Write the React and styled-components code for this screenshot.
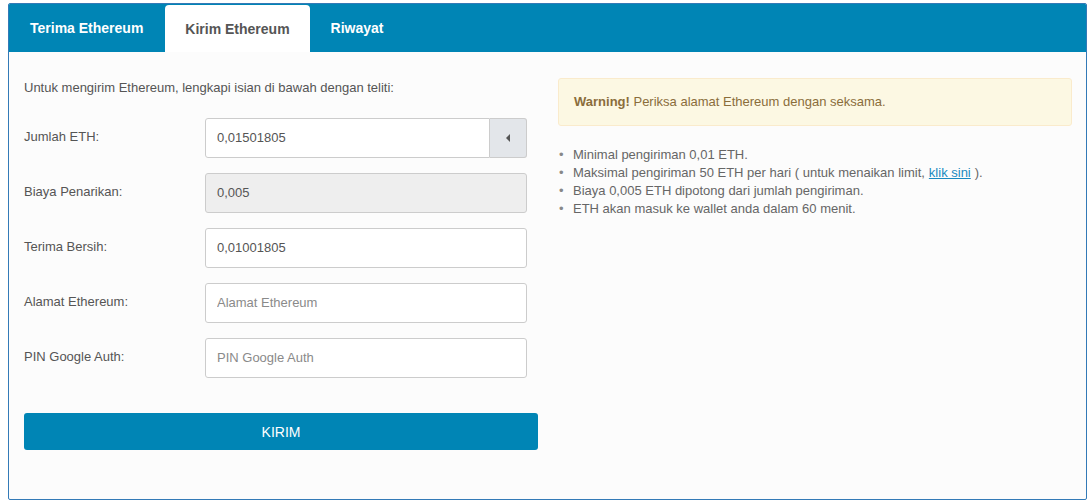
import React from "react";
import styled, { createGlobalStyle } from "styled-components";

const Global = createGlobalStyle`
  html, body { margin: 0; padding: 0; background: #ffffff; }
  body { font-family: "Liberation Sans", Arial, sans-serif; font-size: 13px; color: #555; }
  * { box-sizing: border-box; }
`;

const Page = styled.div`
  padding: 3px 5px 1px 8px;
`;

const Panel = styled.div`
  width: 1079px;
  border: 1px solid #337ab7;
  border-radius: 2px;
  background: #fcfcfc;
  overflow: hidden;
`;

const TabBar = styled.ul`
  display: flex;
  margin: 0;
  padding: 0;
  list-style: none;
  height: 48px;
  background: #0085b5;
`;

const Tab = styled.li`
  display: flex;
  align-items: center;
  margin-top: ${(p) => (p.$active ? "1px" : "0")};
  padding: 0 ${(p) => (p.$active ? "20px" : "21px")};
  margin-left: ${(p) => (p.$active ? "1px" : "0")};
  font-size: 14px;
  font-weight: bold;
  color: ${(p) => (p.$active ? "#555" : "#fff")};
  background: ${(p) => (p.$active ? "#fff" : "transparent")};
  border-radius: 4px 4px 0 0;
  cursor: pointer;
`;

const Body = styled.div`
  display: grid;
  grid-template-columns: 1fr 1fr;
  column-gap: 20px;
  padding: 26px 14px 49px 15px;
`;

const Column = styled.div`
  display: flex;
  flex-direction: column;
`;

const Intro = styled.p`
  margin: 0 0 20px;
  line-height: 20px;
  color: #555;
`;

const Rows = styled.div`
  display: flex;
  flex-direction: column;
  gap: 15px;
`;

const Row = styled.div`
  display: grid;
  grid-template-columns: 181px 322px;
  align-items: center;
`;

const Label = styled.label`
  color: #555;
  padding-bottom: 4px;
`;

const Input = styled.input`
  width: 100%;
  height: 40px;
  padding: 5px 11px 7px;
  font-family: "Liberation Sans", Arial, sans-serif;
  font-size: 13px;
  color: #555;
  background: ${(p) => (p.disabled ? "#eeeeee" : "#fff")};
  border: 1px solid #ccc;
  border-radius: ${(p) => (p.$grouped ? "3px 0 0 3px" : "3px")};
  outline: none;
  &::placeholder { color: #8a8a8a; }
  &:disabled { color: #555; -webkit-text-fill-color: #555; opacity: 1; }
`;

const Group = styled.div`
  display: flex;
`;

const Addon = styled.span`
  display: flex;
  align-items: center;
  justify-content: center;
  flex: 0 0 37px;
  height: 40px;
  background: #e3e6ea;
  border: 1px solid #ccc;
  border-left: none;
  border-radius: 0 3px 3px 0;
`;

const SubmitButton = styled.button`
  margin-top: 35px;
  height: 37px;
  width: 514px;
  border: none;
  border-radius: 3px;
  background: #0085b5;
  color: #fff;
  font-family: "Liberation Sans", Arial, sans-serif;
  font-size: 14px;
  cursor: pointer;
`;

const Warning = styled.div`
  padding: 14px 15px;
  line-height: 18px;
  background: #fcf8e3;
  border: 1px solid #faebcc;
  border-radius: 3px;
  color: #8a6d3b;
`;

const Notes = styled.ul`
  margin: 20px 0 0;
  padding: 0;
  list-style: none;
  line-height: 18px;
  color: #666;
`;

const Note = styled.li`
  display: flex;
  &::before {
    content: "•";
    flex: 0 0 14px;
    padding-left: 1px;
    color: #888;
  }
`;

const Link = styled.a`
  color: #1a8ac0;
  text-decoration: underline;
  margin: 0 4px;
`;

export default function App() {
  return (
    <>
      <Global />
      <Page>
        <Panel>
          <TabBar>
            <Tab>Terima Ethereum</Tab>
            <Tab $active>Kirim Ethereum</Tab>
            <Tab>Riwayat</Tab>
          </TabBar>
          <Body>
            <Column>
              <Intro>Untuk mengirim Ethereum, lengkapi isian di bawah dengan teliti:</Intro>
              <Rows>
                <Row>
                  <Label>Jumlah ETH:</Label>
                  <Group>
                    <Input $grouped defaultValue="0,01501805" />
                    <Addon>
                      <svg width="5" height="8" viewBox="0 0 5 8">
                        <path d="M4 0 L0 4 L4 8 Z" fill="#555" />
                      </svg>
                    </Addon>
                  </Group>
                </Row>
                <Row>
                  <Label>Biaya Penarikan:</Label>
                  <Input disabled defaultValue="0,005" />
                </Row>
                <Row>
                  <Label>Terima Bersih:</Label>
                  <Input defaultValue="0,01001805" />
                </Row>
                <Row>
                  <Label>Alamat Ethereum:</Label>
                  <Input placeholder="Alamat Ethereum" />
                </Row>
                <Row>
                  <Label>PIN Google Auth:</Label>
                  <Input placeholder="PIN Google Auth" />
                </Row>
              </Rows>
              <SubmitButton>KIRIM</SubmitButton>
            </Column>
            <Column>
              <Warning>
                <b>Warning!</b> Periksa alamat Ethereum dengan seksama.
              </Warning>
              <Notes>
                <Note>Minimal pengiriman 0,01 ETH.</Note>
                <Note>
                  <span>
                    Maksimal pengiriman 50 ETH per hari ( untuk menaikan limit,
                    <Link href="#">klik sini</Link>).
                  </span>
                </Note>
                <Note>Biaya 0,005 ETH dipotong dari jumlah pengiriman.</Note>
                <Note>ETH akan masuk ke wallet anda dalam 60 menit.</Note>
              </Notes>
            </Column>
          </Body>
        </Panel>
      </Page>
    </>
  );
}
